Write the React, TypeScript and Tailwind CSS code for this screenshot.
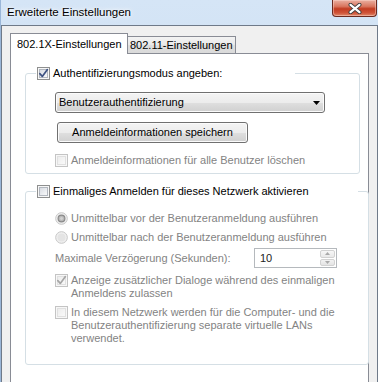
import React from 'react';

function Check({ checked = false, disabled = false }: { checked?: boolean; disabled?: boolean }) {
  const outer = disabled ? '#c4c4c4' : '#8e8f8f';
  const inner = disabled ? '#e0e0e0' : '#b2b7bf';
  const mark = disabled ? '#a6a6a6' : '#3e5282';
  const grad = disabled ? 'cbDis' : 'cbEn';
  return (
    <svg width="13" height="13" viewBox="0 0 13 13" className="shrink-0 block">
      <defs>
        <linearGradient id="cbEn" x1="0" y1="0" x2="1" y2="1">
          <stop offset="0" stopColor="#d6dae1" />
          <stop offset="1" stopColor="#fbfbfc" />
        </linearGradient>
        <linearGradient id="cbDis" x1="0" y1="0" x2="1" y2="1">
          <stop offset="0" stopColor="#ececec" />
          <stop offset="1" stopColor="#fafafa" />
        </linearGradient>
      </defs>
      <rect x="0.5" y="0.5" width="12" height="12" fill="#f7f7f7" stroke={outer} />
      <rect x="2.5" y="2.5" width="8" height="8" fill={`url(#${grad})`} stroke={inner} />
      {checked && (
        <path d="M2.8 6.6 L5.3 9.4 L10.4 2.6" fill="none" stroke={mark} strokeWidth="1.7" strokeLinecap="round" strokeLinejoin="round" />
      )}
    </svg>
  );
}

function Radio({ checked = false }: { checked?: boolean }) {
  return (
    <svg width="13" height="13" viewBox="0 0 13 13" className="shrink-0 block">
      <circle cx="6.5" cy="6.5" r="5.8" fill="#f1f1f1" stroke="#c6c6c6" />
      {checked ? (
        <>
          <circle cx="6.5" cy="6.5" r="3.4" fill="#b9b9b9" stroke="#8a8a8a" strokeWidth="1.2" />
          <circle cx="6.5" cy="6.5" r="1.4" fill="#d2d2d2" />
        </>
      ) : (
        <circle cx="6.5" cy="6.5" r="4" fill="#e4e4e4" />
      )}
    </svg>
  );
}

function CheckRow({
  checked,
  disabled,
  children,
  className = '',
}: {
  checked?: boolean;
  disabled?: boolean;
  children: React.ReactNode;
  className?: string;
}) {
  return (
    <div className={`flex items-start gap-[3px] ${className}`}>
      <Check checked={checked} disabled={disabled} />
      <span className={`leading-[13px] whitespace-nowrap ${disabled ? 'text-[#838383]' : ''}`}>{children}</span>
    </div>
  );
}

function RadioRow({ checked, children, className = '' }: { checked?: boolean; children: React.ReactNode; className?: string }) {
  return (
    <div className={`flex items-start gap-[3px] ${className}`}>
      <Radio checked={checked} />
      <span className="leading-[13px] whitespace-nowrap text-[#838383]">{children}</span>
    </div>
  );
}

function CloseButton() {
  return (
    <div className="mr-[1px] w-[45px] h-[17px] rounded-b-[4px] border border-t-0 border-[#6a2a20] bg-[linear-gradient(to_bottom,#eab0a2_0%,#d9765f_40%,#c23c22_55%,#cf5338_80%,#e08a6c_100%)] shadow-[inset_0_0_0_1px_rgba(255,220,210,0.45)] flex items-center justify-center">
      <svg width="14" height="11" viewBox="0 0 14 11">
        <path d="M2.5 1.8 L11.5 9.2 M11.5 1.8 L2.5 9.2" stroke="#3d3d3d" strokeWidth="4" strokeLinecap="round" />
        <path d="M2.5 1.8 L11.5 9.2 M11.5 1.8 L2.5 9.2" stroke="#ffffff" strokeWidth="2.2" strokeLinecap="round" />
      </svg>
    </div>
  );
}

export default function App() {
  return (
    <div className="w-[378px] h-[382px] overflow-hidden flex flex-col border-l border-[#9ab6d8] bg-[linear-gradient(to_bottom,#d5e5f6,#c7daef_70%,#bccfe4)] font-['Liberation_Sans',Arial,sans-serif] text-[11px] text-black">
      {/* Title bar */}
      <div className="h-[25px] shrink-0 flex items-start justify-between">
        <span className="pl-[6px] pt-[6px] text-[11.5px] leading-[13px] [text-shadow:0_0_6px_#fff,0_0_3px_#fff]">
          Erweiterte Einstellungen
        </span>
        <CloseButton />
      </div>

      {/* Client area */}
      <div className="flex-1 border-l border-t border-r border-[#6f7a89] bg-[#f0f0f0] pl-[8px] pr-[8px] pt-[7px] flex flex-col">
        {/* Tabs */}
        <div className="h-[20px] shrink-0 flex items-end">
          <div className="relative z-10 -mb-px h-[21px] w-[118px] border border-b-0 border-[#898c95] bg-white pl-[6px] pt-[4px] leading-[13px] whitespace-nowrap">
            802.1X-Einstellungen
          </div>
          <div className="-ml-px h-[17px] w-[109px] border border-b-0 border-[#898c95] bg-[linear-gradient(to_bottom,#f3f3f3,#e9e9e9_50%,#dedede_51%,#dadada)] pl-[2px] pt-[2px] leading-[13px] whitespace-nowrap">
            802.11-Einstellungen
          </div>
        </div>

        {/* Tab panel */}
        <div className="h-[400px] shrink-0 border border-[#898c95] bg-white pt-[13px] pl-[14px] pr-[8px] flex flex-col">
          {/* Group 1 */}
          <fieldset className="border border-[#d5dfe5] rounded-[3px] px-[10px] pb-[6px]">
            <legend className="w-[259px] pl-[1px]">
              <CheckRow checked>Authentifizierungsmodus angeben:</CheckRow>
            </legend>
            <div className="ml-[19px] mt-[12px] w-[270px] h-[21px] rounded-[3px] border border-[#707070] bg-[linear-gradient(to_bottom,#f4f4f4_0%,#ececec_50%,#dfdfdf_51%,#d0d0d0_100%)] shadow-[inset_0_0_0_1px_#fbfbfb] flex items-center justify-between pl-[3px] pr-[4px]">
              <span className="leading-[13px]">Benutzerauthentifizierung</span>
              <svg width="7" height="4" viewBox="0 0 7 4" className="block">
                <path d="M0 0 H7 L3.5 4 Z" fill="#000" />
              </svg>
            </div>
            <div className="ml-[21px] mt-[9px] w-[191px] h-[21px] rounded-[3px] border border-[#707070] bg-[linear-gradient(to_bottom,#f4f4f4_0%,#ececec_50%,#dfdfdf_51%,#d0d0d0_100%)] shadow-[inset_0_0_0_1px_#fbfbfb] flex items-center justify-center">
              <span className="leading-[13px]">Anmeldeinformationen speichern</span>
            </div>
            <CheckRow disabled className="ml-[19px] mt-[11px]">
              Anmeldeinformationen für alle Benutzer löschen
            </CheckRow>
          </fieldset>

          {/* Group 2 */}
          <fieldset className="mt-[11px] border border-[#d5dfe5] rounded-[3px] px-[10px] pb-[19px]">
            <legend className="w-[322px] pl-[1px]">
              <CheckRow>Einmaliges Anmelden für dieses Netzwerk aktivieren</CheckRow>
            </legend>
            <RadioRow checked className="ml-[19px] mt-[14px]">
              Unmittelbar vor der Benutzeranmeldung ausführen
            </RadioRow>
            <RadioRow className="ml-[19px] mt-[6px]">Unmittelbar nach der Benutzeranmeldung ausführen</RadioRow>
            <div className="ml-[19px] mt-[4px] h-[20px] flex items-center">
              <span className="w-[199px] leading-[13px] whitespace-nowrap text-[#838383]">Maximale Verzögerung (Sekunden):</span>
              <div className="w-[83px] h-[20px] border border-[#b5b9bd] bg-white flex items-stretch">
                <span className="flex-1 pl-[5px] flex items-center leading-[13px] text-[#222]">10</span>
                <div className="w-[16px] flex flex-col gap-px py-px pr-px">
                  <div className="flex-1 rounded-[2px] border border-[#d2d2d2] bg-[linear-gradient(to_bottom,#f7f7f7,#e9e9e9)] flex items-center justify-center">
                    <svg width="5" height="3" viewBox="0 0 5 3" className="block">
                      <path d="M0 3 H5 L2.5 0 Z" fill="#a9a9a9" />
                    </svg>
                  </div>
                  <div className="flex-1 rounded-[2px] border border-[#d2d2d2] bg-[linear-gradient(to_bottom,#f2f2f2,#e4e4e4)] flex items-center justify-center">
                    <svg width="5" height="3" viewBox="0 0 5 3" className="block">
                      <path d="M0 0 H5 L2.5 3 Z" fill="#a9a9a9" />
                    </svg>
                  </div>
                </div>
              </div>
            </div>
            <CheckRow checked disabled className="ml-[19px] mt-[6px]">
              Anzeige zusätzlicher Dialoge während des einmaligen
              <br />
              Anmeldens zulassen
            </CheckRow>
            <CheckRow disabled className="ml-[19px] mt-[6px]">
              In diesem Netzwerk werden für die Computer- und die
              <br />
              Benutzerauthentifizierung separate virtuelle LANs
              <br />
              verwendet.
            </CheckRow>
          </fieldset>
        </div>
      </div>
    </div>
  );
}
